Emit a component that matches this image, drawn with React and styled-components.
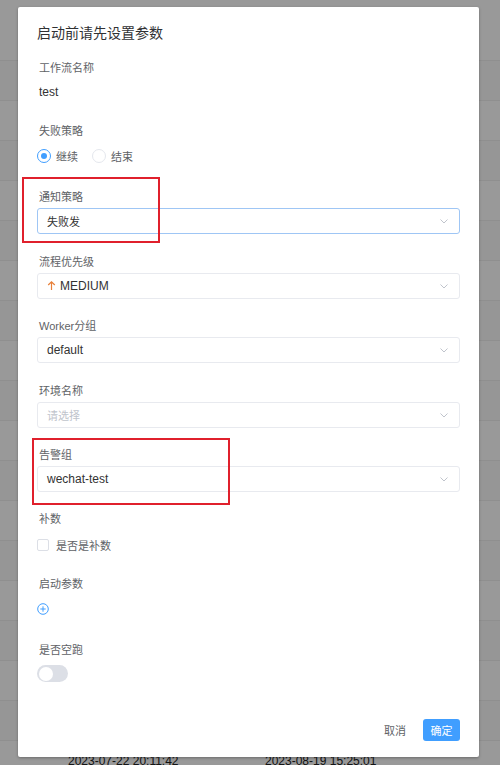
import React, { useState } from "react";
import styled, { createGlobalStyle } from "styled-components";

const GlobalStyle = createGlobalStyle`
  html, body {
    margin: 0;
    padding: 0;
    width: 500px;
    height: 765px;
    overflow: hidden;
  }
  body {
    font-family: "Liberation Sans", "Noto Sans CJK SC", sans-serif;
  }
  * {
    box-sizing: border-box;
  }
`;

const Page = styled.div`
  position: relative;
  width: 500px;
  height: 765px;
  background: #fff;
  overflow: hidden;
`;

const Table = styled.div`
  display: flex;
  flex-direction: column;
  padding-top: 21px;
`;

const TableRow = styled.div`
  flex: none;
  height: 40px;
  border-bottom: 1px solid #efefef;
  background: ${(p) => (p.striped ? "#fafafa" : "#fff")};
  display: flex;
  align-items: center;
  font-family: "Liberation Sans", sans-serif;
  font-size: 12px;
  color: #222;
`;

const Cell = styled.div`
  width: ${(p) => p.w}px;
  padding-left: ${(p) => p.pad || 0}px;
`;

const Mask = styled.div`
  position: absolute;
  inset: 0;
  background: rgba(0, 0, 0, 0.4);
`;

const Modal = styled.div`
  position: absolute;
  top: 7px;
  left: 18px;
  width: 461px;
  height: 750px;
  background: #fff;
  border-radius: 2px;
  box-shadow: 0 1px 3px rgba(0, 0, 0, 0.3);
  display: flex;
  flex-direction: column;
`;

const Header = styled.div`
  padding: 14px 19px 0;
`;

const Title = styled.div`
  font-size: 14px;
  line-height: 24px;
  color: #303133;
`;

const Body = styled.div`
  padding: 13px 19px 0;
  display: flex;
  flex-direction: column;
`;

const FormItem = styled.div`
  margin-bottom: ${(p) => p.mb || 18}px;
`;

const Label = styled.div`
  font-size: 11px;
  line-height: 20px;
  margin-bottom: 1px;
  color: #606266;
  padding-left: 2px;
`;

const Value = styled.div`
  height: ${(p) => p.h || 25}px;
  display: flex;
  align-items: center;
  font-size: 12px;
  color: #333;
  padding-left: 2px;
`;

const RadioGroup = styled.div`
  height: 27px;
  display: flex;
  align-items: center;
  gap: 14px;
`;

const RadioOption = styled.label`
  display: flex;
  align-items: center;
  gap: 5px;
  font-size: 11px;
  color: #606266;
`;

const RadioDot = styled.span`
  width: 14px;
  height: 14px;
  border-radius: 50%;
  border: 1px solid ${(p) => (p.checked ? "#409eff" : "#e4e7ed")};
  display: inline-flex;
  align-items: center;
  justify-content: center;
  &::after {
    content: "";
    width: 6px;
    height: 6px;
    border-radius: 50%;
    background: ${(p) => (p.checked ? "#409eff" : "transparent")};
  }
`;

const Select = styled.div`
  height: 26px;
  border: 1px solid ${(p) => (p.focused ? "#9fc6f5" : "#e8eaef")};
  border-radius: 3px;
  display: flex;
  align-items: center;
  justify-content: space-between;
  padding: 0 10px 0 9px;
  color: ${(p) => (p.placeholder ? "#c0c4cc" : "#333")};
`;

const SelectText = styled.span`
  display: flex;
  align-items: center;
  gap: 4px;
  font-size: ${(p) => (p.cjk ? 11 : 12)}px;
`;

const CheckRow = styled.label`
  height: 30px;
  display: flex;
  align-items: center;
  gap: 7px;
  font-size: 11px;
  color: #606266;
`;

const CheckBox = styled.span`
  width: 12px;
  height: 12px;
  border: 1px solid #dcdfe6;
  border-radius: 2px;
  background: #fff;
`;

const IconRow = styled.div`
  height: 28px;
  display: flex;
  align-items: center;
`;

const SwitchRow = styled.div`
  height: 25px;
  display: flex;
  align-items: center;
`;

const Switch = styled.span`
  width: 31px;
  height: 17px;
  border-radius: 9px;
  background: #dcdfe6;
  position: relative;
  &::after {
    content: "";
    position: absolute;
    top: 1.5px;
    left: 1.5px;
    width: 14px;
    height: 14px;
    border-radius: 50%;
    background: #fff;
  }
`;

const Footer = styled.div`
  margin-top: auto;
  padding: 0 19px 16px;
  display: flex;
  justify-content: flex-end;
  align-items: center;
  gap: 17px;
`;

const TextButton = styled.button`
  border: none;
  background: none;
  padding: 0;
  font-family: inherit;
  font-size: 11px;
  color: #606266;
`;

const PrimaryButton = styled.button`
  border: none;
  background: #409eff;
  color: #fff;
  font-family: inherit;
  font-size: 11px;
  height: 22px;
  width: 37px;
  border-radius: 3px;
  padding: 0;
`;

const Highlight = styled.div`
  position: absolute;
  left: ${(p) => p.x}px;
  top: ${(p) => p.y}px;
  width: ${(p) => p.w}px;
  height: ${(p) => p.h}px;
  border: 2px solid #e0202c;
  pointer-events: none;
`;

const Chevron = () => (
  <svg width="10" height="10" viewBox="0 0 10 10">
    <path d="M1.5 3.5 L5 7 L8.5 3.5" fill="none" stroke="#c0c4cc" strokeWidth="1" />
  </svg>
);

const ArrowUp = () => (
  <svg width="9" height="11" viewBox="0 0 9 11">
    <path d="M4.5 10 V1.8 M1.2 5 L4.5 1.8 L7.8 5" fill="none" stroke="#e8803a" strokeWidth="1.2" />
  </svg>
);

const PlusCircle = () => (
  <svg width="12" height="12" viewBox="0 0 12 12">
    <circle cx="6" cy="6" r="5.3" fill="none" stroke="#409eff" strokeWidth="1" />
    <path d="M6 3.3 V8.7 M3.3 6 H8.7" stroke="#409eff" strokeWidth="1" />
  </svg>
);

const rows = Array.from({ length: 19 });

const App = () => {
  const [strategy] = useState("continue");

  return (
    <Page>
      <GlobalStyle />
      <Table>
        {rows.map((_, i) => (
          <TableRow key={i} striped={i % 2 === 1}>
            {i === 18 && (
              <>
                <Cell w={265} pad={68}>2023-07-22 20:11:42</Cell>
                <Cell w={200}>2023-08-19 15:25:01</Cell>
              </>
            )}
          </TableRow>
        ))}
      </Table>
      <Mask />
      <Modal>
        <Header>
          <Title>启动前请先设置参数</Title>
        </Header>
        <Body>
          <FormItem mb={17}>
            <Label>工作流名称</Label>
            <Value>test</Value>
          </FormItem>
          <FormItem>
            <Label>失败策略</Label>
            <RadioGroup>
              <RadioOption>
                <RadioDot checked={strategy === "continue"} />
                继续
              </RadioOption>
              <RadioOption>
                <RadioDot checked={strategy === "end"} />
                结束
              </RadioOption>
            </RadioGroup>
          </FormItem>
          <FormItem mb={17.5}>
            <Label>通知策略</Label>
            <Select focused>
              <SelectText cjk>失败发</SelectText>
              <Chevron />
            </Select>
          </FormItem>
          <FormItem mb={17.5}>
            <Label>流程优先级</Label>
            <Select>
              <SelectText>
                <ArrowUp />
                MEDIUM
              </SelectText>
              <Chevron />
            </Select>
          </FormItem>
          <FormItem mb={17.5}>
            <Label>Worker分组</Label>
            <Select>
              <SelectText>default</SelectText>
              <Chevron />
            </Select>
          </FormItem>
          <FormItem mb={17.5}>
            <Label>环境名称</Label>
            <Select placeholder>
              <SelectText cjk>请选择</SelectText>
              <Chevron />
            </Select>
          </FormItem>
          <FormItem mb={17}>
            <Label>告警组</Label>
            <Select>
              <SelectText>wechat-test</SelectText>
              <Chevron />
            </Select>
          </FormItem>
          <FormItem mb={14}>
            <Label>补数</Label>
            <CheckRow>
              <CheckBox />
              是否是补数
            </CheckRow>
          </FormItem>
          <FormItem mb={17}>
            <Label>启动参数</Label>
            <IconRow>
              <PlusCircle />
            </IconRow>
          </FormItem>
          <FormItem>
            <Label>是否空跑</Label>
            <SwitchRow>
              <Switch />
            </SwitchRow>
          </FormItem>
        </Body>
        <Footer>
          <TextButton>取消</TextButton>
          <PrimaryButton>确定</PrimaryButton>
        </Footer>
        <Highlight x={4} y={170} w={138} h={66} />
        <Highlight x={14} y={431} w={198} h={67} />
      </Modal>
    </Page>
  );
};

export default App;
